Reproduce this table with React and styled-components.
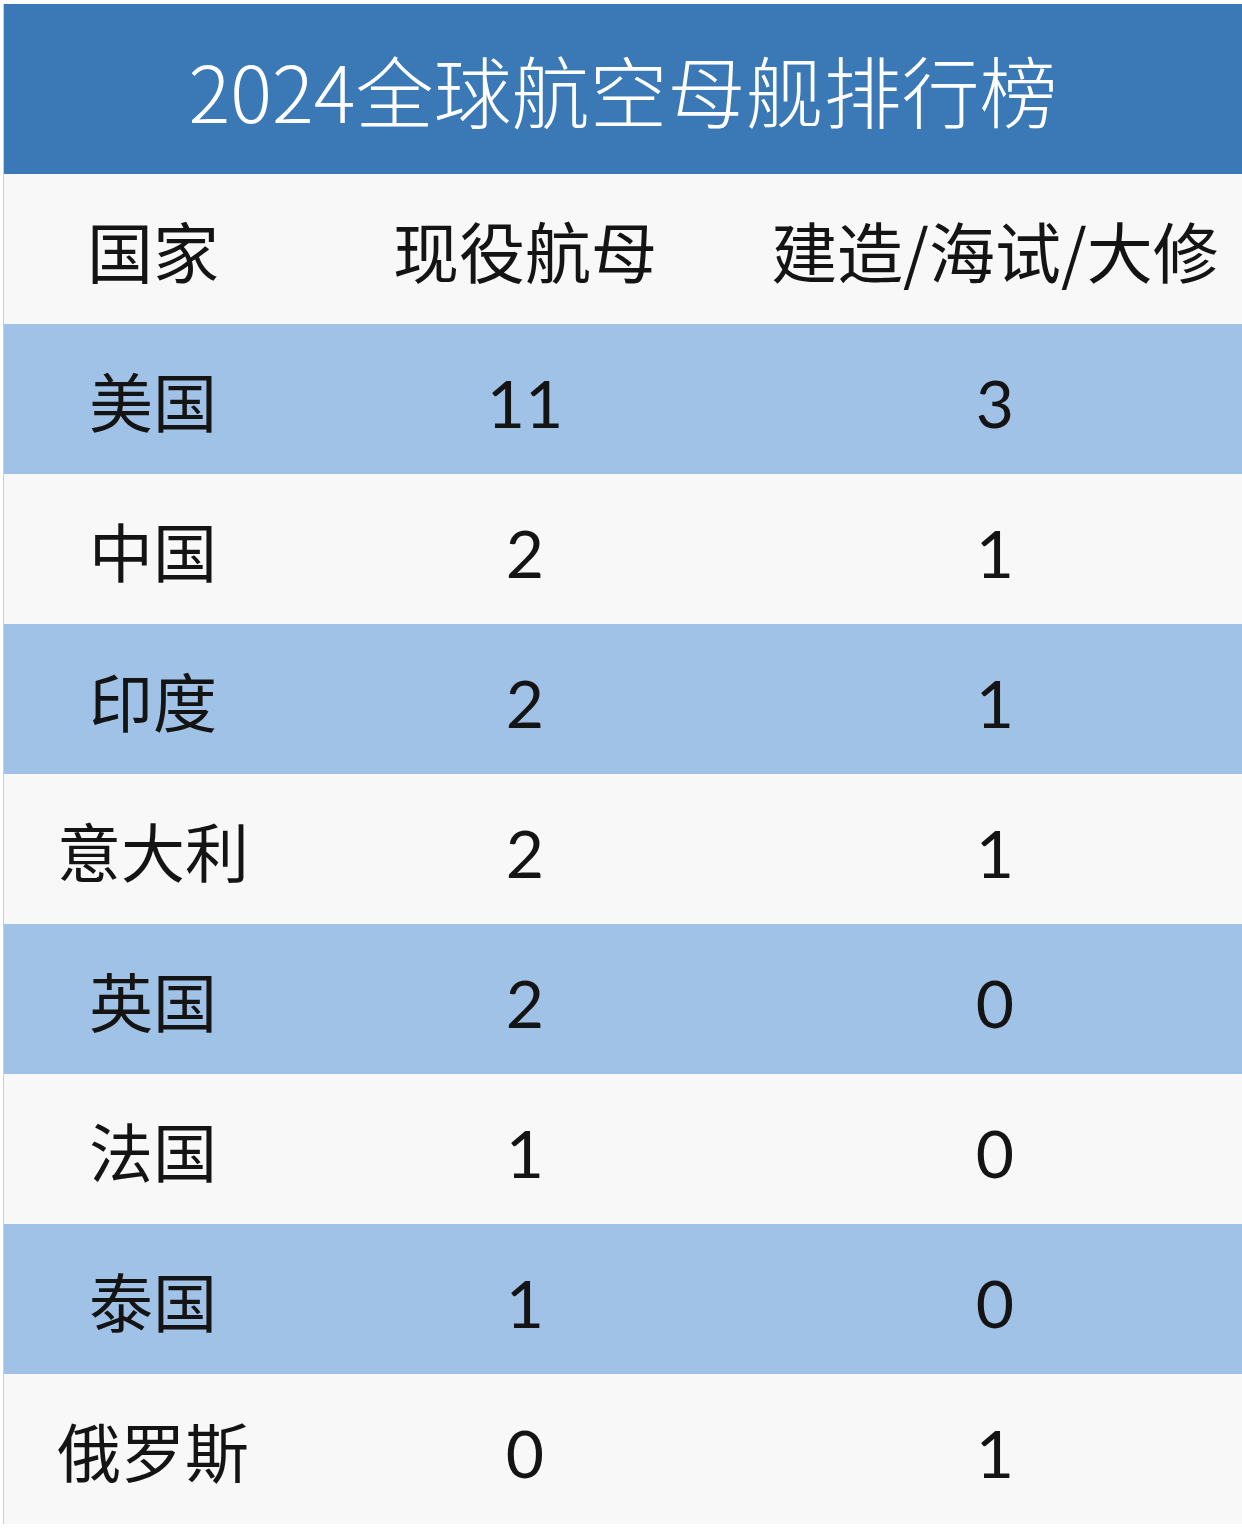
import React from 'react'
import styled, { createGlobalStyle } from 'styled-components'

const GlobalStyle = createGlobalStyle`
  html, body {
    margin: 0;
    padding: 0;
    background: #ffffff;
  }
  body {
    font-family: "Noto Sans CJK SC", "Noto Sans", sans-serif;
  }
`

const rows = [
  { country: '美国', active: '11', building: '3' },
  { country: '中国', active: '2', building: '1' },
  { country: '印度', active: '2', building: '1' },
  { country: '意大利', active: '2', building: '1' },
  { country: '英国', active: '2', building: '0' },
  { country: '法国', active: '1', building: '0' },
  { country: '泰国', active: '1', building: '0' },
  { country: '俄罗斯', active: '0', building: '1' }
]

const Page = styled.div`
  width: 1242px;
  height: 1530px;
  padding-top: 4px;
  box-sizing: border-box;
  overflow: hidden;
`

const Board = styled.div`
  margin-left: 3px;
  border-left: 1px solid #c9ccd0;
  display: flex;
  flex-direction: column;
`

const Title = styled.div`
  height: 170px;
  background: #3a78b6;
  color: #ffffff;
  font-size: 78px;
  font-weight: 300;
  display: flex;
  align-items: center;
  justify-content: center;
`

const Row = styled.div`
  height: 150px;
  display: grid;
  grid-template-columns: 298px 446px 1fr;
  align-items: center;
  background: ${p => (p.$shaded ? '#a0c2e6' : '#f8f8f8')};
  color: #141414;
`

const Cell = styled.div`
  text-align: center;
  white-space: nowrap;
  font-family: ${p => (p.$num ? 'Lato, "Noto Sans CJK SC", sans-serif' : '"Noto Sans CJK SC", sans-serif')};
  font-size: ${p => (p.$num ? '66px' : '64px')};
  font-weight: 400;
  padding-top: ${p => (p.$num ? '6px' : '0')};
`

const HeadCell = styled(Cell)`
  font-size: 66px;
`

export default function App () {
  return (
    <Page>
      <GlobalStyle />
      <Board>
        <Title>2024全球航空母舰排行榜</Title>
        <Row>
          <HeadCell>国家</HeadCell>
          <HeadCell>现役航母</HeadCell>
          <HeadCell>建造/海试/大修</HeadCell>
        </Row>
        {rows.map((r, i) => (
          <Row key={r.country} $shaded={i % 2 === 0}>
            <Cell>{r.country}</Cell>
            <Cell $num>{r.active}</Cell>
            <Cell $num>{r.building}</Cell>
          </Row>
        ))}
      </Board>
    </Page>
  )
}
